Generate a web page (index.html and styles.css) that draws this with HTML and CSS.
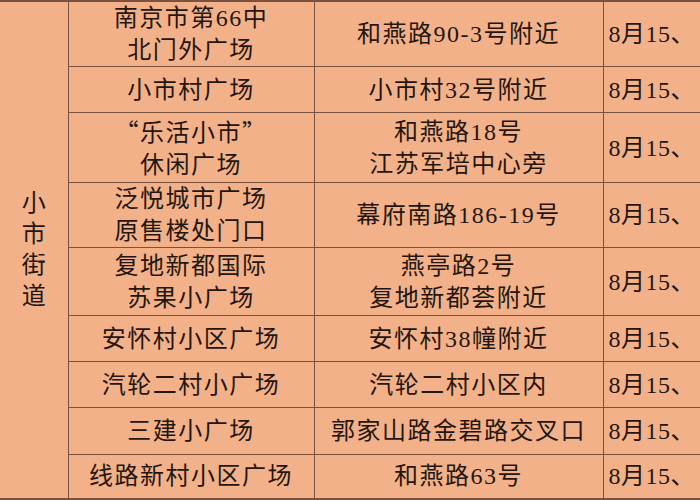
FILE: index.html
```html
<!DOCTYPE html>
<html lang="zh-CN">
<head>
<meta charset="utf-8">
<link rel="stylesheet" href="styles.css">
</head>
<body>
<div class="page">
<table class="sched">
  <colgroup>
    <col class="c1"><col class="c2"><col class="c3"><col class="c4">
  </colgroup>
  <tbody>
    <tr class="r1">
      <td class="street" rowspan="9"><div class="vtext"><span>小</span><span>市</span><span>街</span><span>道</span></div></td>
      <td>南京市第66中<br>北门外广场</td>
      <td>和燕路90-3号附近</td>
      <td class="date">8月15、</td>
    </tr>
    <tr class="r2">
      <td>小市村广场</td>
      <td>小市村32号附近</td>
      <td class="date">8月15、</td>
    </tr>
    <tr class="r3">
      <td><span class="quote">“</span>乐活小市<span class="quote">”</span><br>休闲广场</td>
      <td>和燕路18号<br>江苏军培中心旁</td>
      <td class="date">8月15、</td>
    </tr>
    <tr class="r4">
      <td>泛悦城市广场<br>原售楼处门口</td>
      <td>幕府南路186-19号</td>
      <td class="date">8月15、</td>
    </tr>
    <tr class="r5">
      <td>复地新都国际<br>苏果小广场</td>
      <td>燕亭路2号<br>复地新都荟附近</td>
      <td class="date">8月15、</td>
    </tr>
    <tr class="r6">
      <td>安怀村小区广场</td>
      <td>安怀村38幢附近</td>
      <td class="date">8月15、</td>
    </tr>
    <tr class="r7">
      <td>汽轮二村小广场</td>
      <td>汽轮二村小区内</td>
      <td class="date">8月15、</td>
    </tr>
    <tr class="r8">
      <td>三建小广场</td>
      <td>郭家山路金碧路交叉口</td>
      <td class="date">8月15、</td>
    </tr>
    <tr class="r9">
      <td>线路新村小区广场</td>
      <td>和燕路63号</td>
      <td class="date">8月15、</td>
    </tr>
  </tbody>
</table>
</div>
</body>
</html>
```

FILE: styles.css
```css
html, body {
  margin: 0;
  padding: 0;
  background: #f3b18a;
}

.page {
  width: 700px;
  height: 500px;
  overflow: hidden;
  background: #f3b18a;
}

.sched {
  border-collapse: collapse;
  table-layout: fixed;
  width: 700px;
  font-family: "Liberation Serif", "Noto Sans CJK SC", serif;
  font-size: 24px;
  color: #24160e;
  border-top: 2px solid #7a5240;
  border-bottom: 2px solid #7a5240;
}

.c1 { width: 68px; }
.c2 { width: 246px; }
.c3 { width: 289px; }
.c4 { width: 97px; }

.sched td {
  border-top: 1px solid #7a5240;
  border-bottom: 1px solid #7a5240;
  border-left: 1px solid #7a5240;
  padding: 0;
  text-align: center;
  vertical-align: middle;
  line-height: 32px;
  letter-spacing: 1.5px;
  white-space: nowrap;
}

.sched td.street {
  border-left: none;
}

.sched td.date {
  text-align: left;
  padding-left: 5px;
  letter-spacing: 0.5px;
}

.vtext {
  display: flex;
  flex-direction: column;
  align-items: center;
  line-height: 31px;
  letter-spacing: 0;
}

.quote {
  font-family: "Noto Sans CJK SC", sans-serif;
}

.r1 { height: 62px; }
.r2 { height: 46px; }
.r3 { height: 70px; }
.r4 { height: 62px; }
.r5 { height: 68px; }
.r6 { height: 46px; }
.r7 { height: 46px; }
.r8 { height: 47px; }
.r9 { height: 44px; }
```
